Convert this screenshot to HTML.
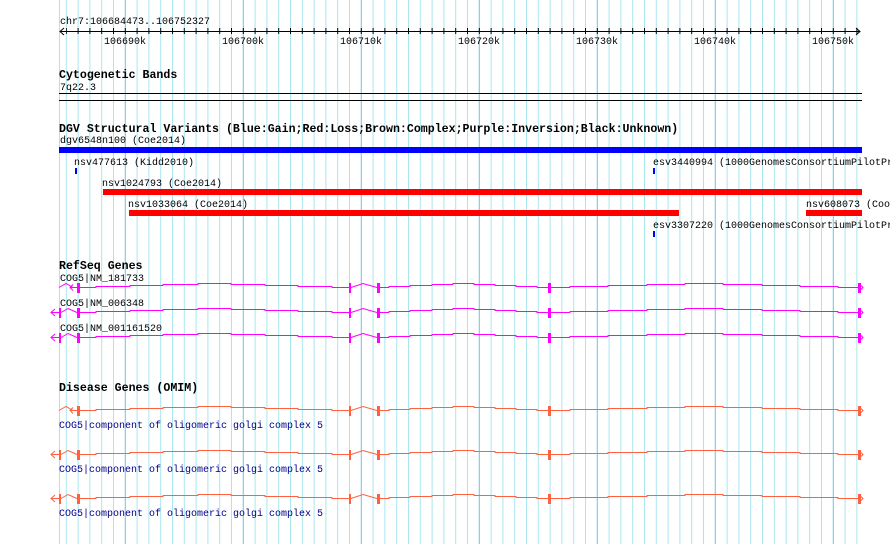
<!DOCTYPE html>
<html><head><meta charset="utf-8"><style>
html,body{margin:0;padding:0;background:#fff;}
svg{display:block}
text{font-family:"Liberation Mono","DejaVu Sans Mono",monospace;font-size:10px;fill:#000}
.b{font-weight:bold;font-size:11.6px}
.n{fill:#00008c}
</style></head><body>
<svg width="890" height="544" viewBox="0 0 890 544" xmlns="http://www.w3.org/2000/svg">
<defs>
<pattern id="minor" patternUnits="userSpaceOnUse" x="124.8" y="0" width="11.8" height="10">
<rect x="0" y="0" width="1" height="10" fill="#a8e6ee"/>
</pattern>
<pattern id="major" patternUnits="userSpaceOnUse" x="124.8" y="0" width="118" height="10">
<rect x="0" y="0" width="1" height="10" fill="#8ec0e4"/>
</pattern>
<pattern id="tick" patternUnits="userSpaceOnUse" x="124.8" y="0" width="11.8" height="10">
<rect x="0" y="0" width="1" height="10" fill="#000"/>
</pattern>
<g id="introns" fill="none" stroke="currentColor" stroke-width="1">
<path d="M80 0.5 H96 V-0.5 H130 V-1.5 H163 V-2.5 H198 V-3.5 H231 V-2.5 H265 V-1.5 H298 V-0.5 H332 V0.5 H350"/>
<path d="M351 0.5 L363 -3.5 L377 0.5"/>
<path d="M379 0.5 H389 V-0.5 H410 V-1.5 H432 V-2.5 H453 V-3.5 H474 V-2.5 H495 V-1.5 H516 V-0.5 H537 V0.5 H549"/>
<path d="M551 0.5 H570 V-0.5 H608 V-1.5 H647 V-2.5 H685 V-3.5 H723 V-2.5 H762 V-1.5 H800 V-0.5 H838 V0.5 H858"/>
</g>
<g id="exons" fill="currentColor">
<rect x="77" y="-4" width="3" height="10"/>
<rect x="349" y="-4" width="2" height="10"/>
<rect x="377" y="-4" width="3" height="10"/>
<rect x="548" y="-4" width="3" height="10"/>
<rect x="858" y="-4" width="3" height="10"/>
<path d="M861 -1.5 L863 0.5 L861 2.5" fill="none" stroke="currentColor"/>
</g>
<g id="g1">
<use href="#introns"/><use href="#exons"/>
<path d="M59 0.5 L66 -3.5 L73 0.5 M70 0.5 H77 M73 -2.5 L70 0.5 L73 3.5" fill="none" stroke="currentColor"/>
</g>
<g id="g2">
<use href="#introns"/><use href="#exons"/>
<rect x="59" y="-4" width="2" height="10" fill="currentColor"/>
<path d="M51 0.5 H59 M55 -3 L51 0.5 L55 4 M61 0.5 L68 -3.5 L77 0.5" fill="none" stroke="currentColor"/>
</g>
</defs>

<rect x="59" y="0" width="802" height="544" fill="url(#minor)"/>
<rect x="59" y="0" width="802" height="544" fill="url(#major)"/>
<rect x="59" y="0" width="1" height="544" fill="#a8e6ee"/>

<text x="60" y="24">chr7:106684473..106752327</text>
<rect x="60" y="31" width="800" height="1" fill="#000"/>
<rect x="66" y="28" width="794" height="6" fill="url(#tick)"/>
<path d="M64 28 L60 31.5 L64 35 M856 28 L860 31.5 L856 35" stroke="#000" fill="none"/>
<text x="104" y="44">106690k</text>
<text x="222" y="44">106700k</text>
<text x="340" y="44">106710k</text>
<text x="458" y="44">106720k</text>
<text x="576" y="44">106730k</text>
<text x="694" y="44">106740k</text>
<text x="812" y="44">106750k</text>

<text class="b" x="59" y="78">Cytogenetic Bands</text>
<text x="60" y="90">7q22.3</text>
<rect x="59" y="93" width="803" height="1" fill="#000"/>
<rect x="59" y="100" width="803" height="1" fill="#000"/>

<text class="b" x="59" y="132">DGV Structural Variants (Blue:Gain;Red:Loss;Brown:Complex;Purple:Inversion;Black:Unknown)</text>
<text x="60" y="143">dgv6548n100 (Coe2014)</text>
<rect x="59" y="147" width="803" height="6" fill="#0000ff"/>
<text x="74" y="165">nsv477613 (Kidd2010)</text>
<rect x="75" y="168" width="2" height="6" fill="#0000ff"/>
<text x="653" y="165">esv3440994 (1000GenomesConsortiumPilotProject)</text>
<rect x="653" y="168" width="2" height="6" fill="#0000ff"/>
<text x="102" y="186">nsv1024793 (Coe2014)</text>
<rect x="103" y="189" width="759" height="6" fill="#ff0000"/>
<text x="128" y="207">nsv1033064 (Coe2014)</text>
<rect x="129" y="210" width="550" height="6" fill="#ff0000"/>
<text x="806" y="207">nsv608073 (Cooper2011)</text>
<rect x="806" y="210" width="56" height="6" fill="#ff0000"/>
<text x="653" y="228">esv3307220 (1000GenomesConsortiumPilotProject)</text>
<rect x="653" y="231" width="2" height="6" fill="#0000ff"/>

<text class="b" x="59" y="269">RefSeq Genes</text>
<text x="60" y="281">COG5|NM_181733</text>
<use href="#g1" y="287" style="color:#ff00ff"/>
<text x="60" y="306">COG5|NM_006348</text>
<use href="#g2" y="312" style="color:#ff00ff"/>
<text x="60" y="331">COG5|NM_001161520</text>
<use href="#g2" y="337" style="color:#ff00ff"/>

<text class="b" x="59" y="391">Disease Genes (OMIM)</text>
<use href="#g1" y="410" style="color:#ff6040"/>
<text class="n" x="59" y="428">COG5|component of oligomeric golgi complex 5</text>
<use href="#g2" y="454" style="color:#ff6040"/>
<text class="n" x="59" y="472">COG5|component of oligomeric golgi complex 5</text>
<use href="#g2" y="498" style="color:#ff6040"/>
<text class="n" x="59" y="516">COG5|component of oligomeric golgi complex 5</text>
</svg>
</body></html>
